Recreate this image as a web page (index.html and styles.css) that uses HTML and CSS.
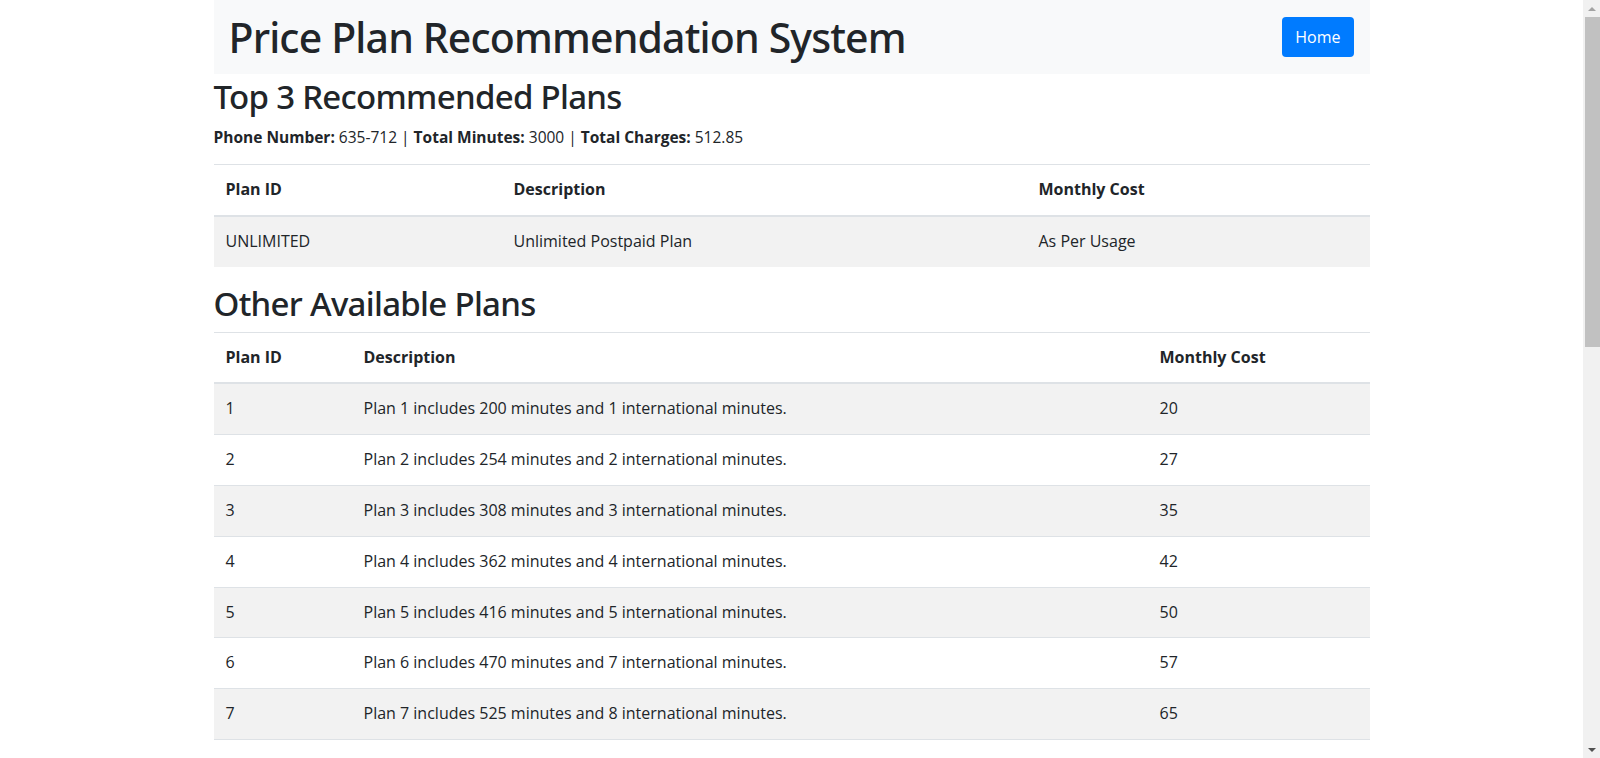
FILE: index.html
```html
<!DOCTYPE html>
<html lang="en">
<head>
<meta charset="utf-8">
<title>Price Plan Recommendation System</title>
<link rel="stylesheet" href="styles.css">
</head>
<body>
<div class="page">
<div class="container">
  <header class="topbar">
    <h1 class="brand">Price Plan Recommendation System</h1>
    <a class="btn-home" href="#">Home</a>
  </header>

  <h2 class="section-title">Top 3 Recommended Plans</h2>
  <p class="summary"><b>Phone Number:</b> 635-712 | <b>Total Minutes:</b> 3000 | <b>Total Charges:</b> 512.85</p>

  <table class="plans plans-top">
    <colgroup><col class="c1"><col class="c2"><col class="c3"></colgroup>
    <thead><tr><th>Plan ID</th><th>Description</th><th>Monthly Cost</th></tr></thead>
    <tbody>
      <tr><td>UNLIMITED</td><td>Unlimited Postpaid Plan</td><td>As Per Usage</td></tr>
    </tbody>
  </table>

  <h2 class="section-title other">Other Available Plans</h2>
  <table class="plans plans-other">
    <colgroup><col class="c1"><col class="c2"><col class="c3"></colgroup>
    <thead><tr><th>Plan ID</th><th>Description</th><th>Monthly Cost</th></tr></thead>
    <tbody>
      <tr><td>1</td><td>Plan 1 includes 200 minutes and 1 international minutes.</td><td>20</td></tr>
      <tr><td>2</td><td>Plan 2 includes 254 minutes and 2 international minutes.</td><td>27</td></tr>
      <tr><td>3</td><td>Plan 3 includes 308 minutes and 3 international minutes.</td><td>35</td></tr>
      <tr><td>4</td><td>Plan 4 includes 362 minutes and 4 international minutes.</td><td>42</td></tr>
      <tr><td>5</td><td>Plan 5 includes 416 minutes and 5 international minutes.</td><td>50</td></tr>
      <tr><td>6</td><td>Plan 6 includes 470 minutes and 7 international minutes.</td><td>57</td></tr>
      <tr><td>7</td><td>Plan 7 includes 525 minutes and 8 international minutes.</td><td>65</td></tr>
      <tr><td>8</td><td>Plan 8 includes 579 minutes and 9 international minutes.</td><td>72</td></tr>
      <tr><td>9</td><td>Plan 9 includes 633 minutes and 10 international minutes.</td><td>80</td></tr>
      <tr><td>10</td><td>Plan 10 includes 687 minutes and 11 international minutes.</td><td>87</td></tr>
      <tr><td>11</td><td>Plan 11 includes 741 minutes and 13 international minutes.</td><td>95</td></tr>
      <tr><td>12</td><td>Plan 12 includes 795 minutes and 14 international minutes.</td><td>102</td></tr>
      <tr><td>13</td><td>Plan 13 includes 850 minutes and 15 international minutes.</td><td>110</td></tr>
      <tr><td>14</td><td>Plan 14 includes 904 minutes and 16 international minutes.</td><td>117</td></tr>
      <tr><td>15</td><td>Plan 15 includes 958 minutes and 17 international minutes.</td><td>125</td></tr>
      <tr><td>16</td><td>Plan 16 includes 1012 minutes and 19 international minutes.</td><td>132</td></tr>
      <tr><td>17</td><td>Plan 17 includes 1066 minutes and 20 international minutes.</td><td>140</td></tr>
      <tr><td>18</td><td>Plan 18 includes 1120 minutes and 21 international minutes.</td><td>147</td></tr>
      <tr><td>19</td><td>Plan 19 includes 1175 minutes and 22 international minutes.</td><td>155</td></tr>
      <tr><td>20</td><td>Plan 20 includes 1229 minutes and 23 international minutes.</td><td>162</td></tr>
      <tr><td>21</td><td>Plan 21 includes 1283 minutes and 25 international minutes.</td><td>170</td></tr>
      <tr><td>22</td><td>Plan 22 includes 1337 minutes and 26 international minutes.</td><td>177</td></tr>
      <tr><td>23</td><td>Plan 23 includes 1391 minutes and 27 international minutes.</td><td>185</td></tr>
      <tr><td>24</td><td>Plan 24 includes 1445 minutes and 28 international minutes.</td><td>192</td></tr>
      <tr><td>25</td><td>Plan 25 includes 1500 minutes and 30 international minutes.</td><td>200</td></tr>
    </tbody>
  </table>
</div>
</div>

<div class="fake-scrollbar" aria-hidden="true">
  <div class="sb-arrow sb-up"></div>
  <div class="sb-track"><div class="sb-thumb"></div></div>
  <div class="sb-arrow sb-down"></div>
</div>
</body>
</html>
```

FILE: styles.css
```css
html, body {
  margin: 0;
  padding: 0;
  background: #fff;
}

body {
  font-family: "Open Sans", "Noto Sans", "Liberation Sans", sans-serif;
  font-size: 16px;
  line-height: 1.5;
  color: #212529;
}

.page {
  padding-right: 17px;
}

.container {
  width: 1156px;
  margin: 0 auto;
}

.topbar {
  display: flex;
  justify-content: space-between;
  align-items: center;
  height: 74px;
  padding: 0 16px 0 15px;
  background: #f8f9fa;
  box-sizing: border-box;
}

.brand {
  margin: 0;
  font-family: "Noto Sans", "Open Sans", sans-serif;
  font-size: 41px;
  font-weight: 500;
  line-height: 49px;
  letter-spacing: -0.85px;
  color: #212529;
}

.btn-home {
  display: inline-block;
  padding: 8px 13px;
  line-height: 24px;
  font-size: 16px;
  color: #fff;
  background: #007bff;
  border-radius: 4px;
  text-decoration: none;
}

.section-title {
  margin: 3px 0 8px;
  font-family: "Noto Sans", "Open Sans", sans-serif;
  font-size: 33px;
  font-weight: 500;
  line-height: 40px;
  letter-spacing: -0.7px;
}

.section-title.other {
  margin-top: 17px;
}

.summary {
  margin: 0 0 15px;
  font-size: 15.5px;
  line-height: 24px;
}

.summary b {
  font-weight: 700;
}

.plans {
  width: 100%;
  border-collapse: collapse;
  table-layout: fixed;
  margin: 0;
}

.plans th,
.plans td {
  padding: 12px;
  line-height: 25.8px;
  text-align: left;
  vertical-align: top;
  border-top: 1px solid #dee2e6;
}

.plans th {
  font-weight: 700;
}

.plans thead th {
  border-bottom: 2px solid #dee2e6;
}

.plans tbody tr:nth-child(odd) {
  background: #f2f2f2;
}

.plans-top .c1 { width: 288px; }
.plans-top .c2 { width: 525px; }
.plans-top .c3 { width: 343px; }

.plans-other .c1 { width: 138px; }
.plans-other .c2 { width: 796px; }
.plans-other .c3 { width: 222px; }

.plans-other {
  margin-bottom: 16px;
}

/* imitation of the classic browser scrollbar shown in the reference */
.fake-scrollbar {
  position: fixed;
  top: 0;
  right: 0;
  width: 17px;
  height: 100vh;
  background: #f1f1f1;
  display: flex;
  flex-direction: column;
}

.sb-arrow {
  height: 17px;
  flex: none;
  display: flex;
  align-items: center;
  justify-content: center;
}

.sb-up::before {
  content: "";
  border-left: 4px solid transparent;
  border-right: 4px solid transparent;
  border-bottom: 4px solid #a3a3a3;
}

.sb-down::before {
  content: "";
  border-left: 4px solid transparent;
  border-right: 4px solid transparent;
  border-top: 4px solid #505050;
}

.sb-track {
  flex: 1;
  padding: 0 0 0 2px;
}

.sb-thumb {
  height: 330px;
  background: #c1c1c1;
}
```
